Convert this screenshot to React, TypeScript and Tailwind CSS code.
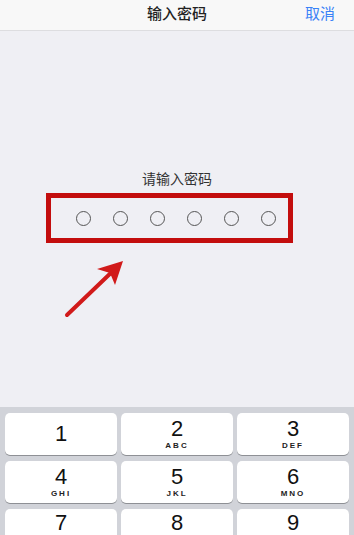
const keys = [
  { d: '1', l: '' },
  { d: '2', l: 'ABC' },
  { d: '3', l: 'DEF' },
  { d: '4', l: 'GHI' },
  { d: '5', l: 'JKL' },
  { d: '6', l: 'MNO' },
  { d: '7', l: '' },
  { d: '8', l: '' },
  { d: '9', l: '' },
]

function Key({ d, l, last }: { d: string; l: string; last?: boolean }) {
  return (
    <div
      className={
        last
          ? 'h-[42px] rounded-[5px] bg-white shadow-[0_1px_0_#8e9095] flex flex-col items-center pt-[3px]'
          : 'h-[42px] rounded-[5px] bg-white shadow-[0_1px_0_#8e9095] flex flex-col items-center justify-center'
      }
    >
      <span
        className={
          last
            ? "text-[22px] leading-[22px] text-[#111] font-['Liberation_Sans',sans-serif]"
            : "text-[22px] leading-[24px] text-[#111] font-['Liberation_Sans',sans-serif]"
        }
      >
        {d}
      </span>
      {l && (
        <span className="text-[8px] leading-[10px] font-bold tracking-[2px] text-[#222] font-['Liberation_Sans',sans-serif]">
          {l}
        </span>
      )}
    </div>
  )
}

export default function App() {
  return (
    <div className="w-[354px] h-[535px] overflow-hidden flex flex-col bg-[#efeff4] font-['Noto_Sans_CJK_SC','Noto_Sans',sans-serif]">
      {/* Header */}
      <div className="h-[31px] shrink-0 grid grid-cols-[1fr_auto_1fr] items-center bg-[#f8f8f8] border-b border-[#dddde0]">
        <div />
        <span className="text-[15px] font-medium text-[#222] leading-none -mt-[6px]">输入密码</span>
        <span className="justify-self-end pr-[19px] text-[15px] text-[#3a82f7] leading-none -mt-[6px]">取消</span>
      </div>

      {/* Body */}
      <div className="flex-1 flex flex-col items-center">
        <p className="mt-[137px] text-[14px] leading-[20px] text-[#333]">请输入密码</p>
        <div className="self-start ml-[46px] mt-[5px] w-[247px] h-[50px] border-[5px] border-[#c30d0d] flex items-center pl-[25px] gap-[22px]">
          {Array.from({ length: 6 }).map((_, i) => (
            <div key={i} className="w-[15px] h-[15px] rounded-full border border-[#555]" />
          ))}
        </div>
        <svg className="self-start ml-[60px] mt-[14px]" width="70" height="66" viewBox="0 0 70 66">
          <line x1="7" y1="58" x2="55" y2="12" stroke="#d11a1a" strokeWidth="4" strokeLinecap="round" />
          <polygon points="63,4 37,12 50,16 55,28" fill="#d11a1a" />
        </svg>
      </div>

      {/* Keypad */}
      <div className="shrink-0 h-[128px] bg-[#d1d3d9] px-[5px] pt-[6px] grid grid-cols-3 gap-x-[4px] gap-y-[6px] content-start">
        {keys.map((k, i) => (
          <Key key={k.d} d={k.d} l={k.l} last={i > 5} />
        ))}
      </div>
    </div>
  )
}
